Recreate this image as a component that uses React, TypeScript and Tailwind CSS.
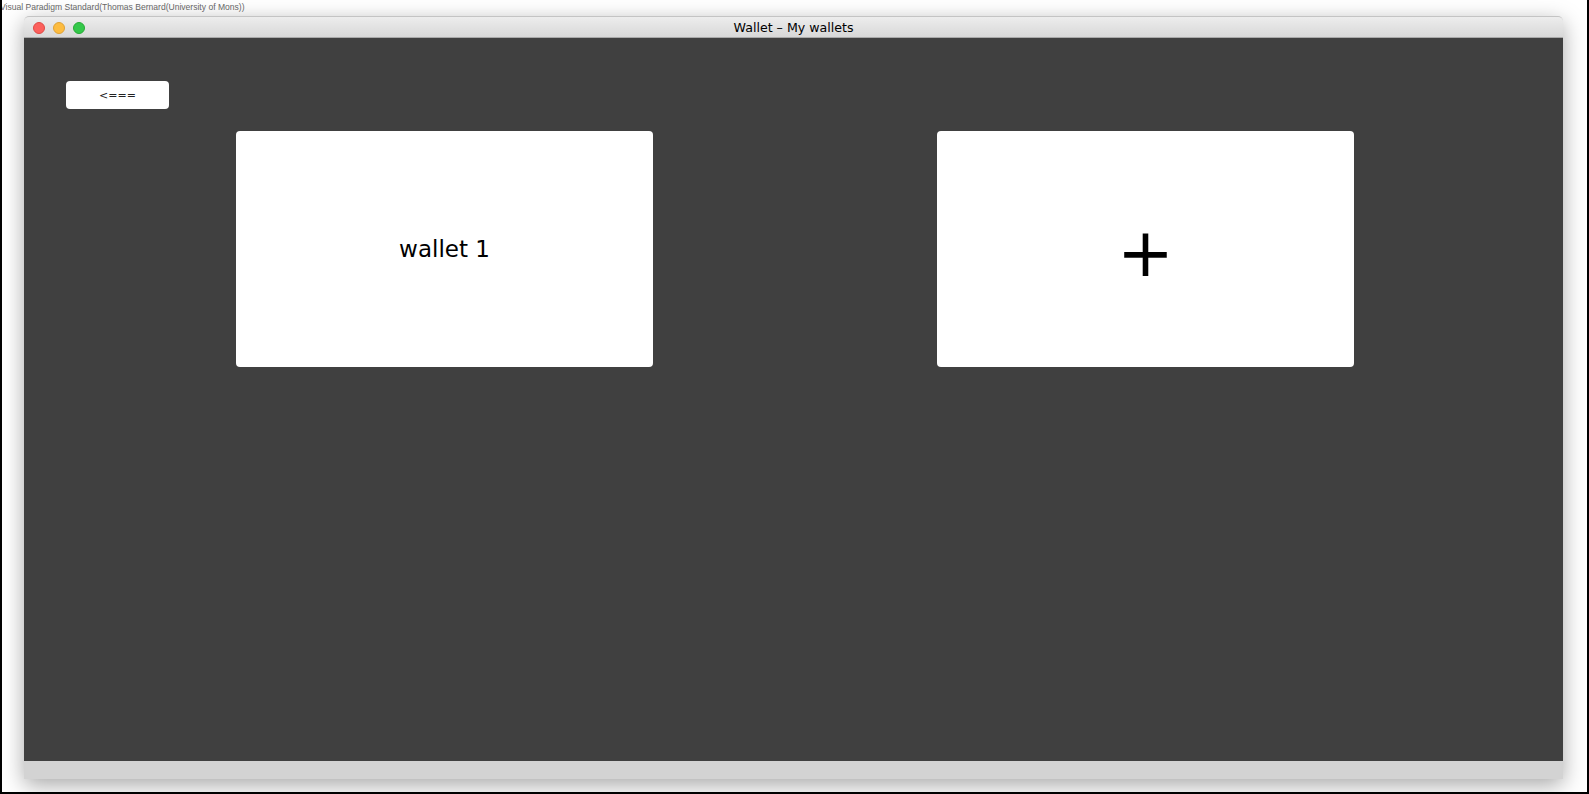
export default function App() {
  return (
    <div className="w-[1589px] h-[794px] bg-white border-l-2 border-r-2 border-b-2 border-black overflow-hidden box-border font-['DejaVu_Sans',sans-serif]">
      {/* tool caption */}
      <div className="h-[16px] -ml-[2px] pt-[1px] font-['Liberation_Sans',sans-serif] text-[8.55px] leading-[12px] text-[#666] whitespace-nowrap">
        Visual Paradigm Standard(Thomas Bernard(University of Mons))
      </div>

      {/* window */}
      <div className="ml-[22px] w-[1539px] rounded-t-[5px] shadow-[0_6px_22px_rgba(0,0,0,0.35)]">
        {/* title bar */}
        <div className="h-[22px] grid grid-cols-[1fr_auto_1fr] items-center pt-[3px] rounded-t-[5px] border-t border-[#c4c4c4] border-b border-b-[#a9a9a9] bg-gradient-to-b from-[#ededed] to-[#d8d8d8]">
          <div className="flex items-center gap-[8px] pl-[9px] -mt-[1px]">
            <span className="w-[12px] h-[12px] rounded-full bg-[#fc605c] border border-[#de4a45]" />
            <span className="w-[12px] h-[12px] rounded-full bg-[#fdbc40] border border-[#dea236]" />
            <span className="w-[12px] h-[12px] rounded-full bg-[#34c84a] border border-[#27aa35]" />
          </div>
          <div className="text-[12.6px] text-black leading-none">Wallet – My wallets</div>
          <div />
        </div>

        {/* content */}
        <div className="h-[723px] bg-[#404040] pt-[43px]">
          <div className="pl-[42px]">
            <button className="w-[103px] h-[28px] rounded-[4px] bg-white text-[11px] text-[#222] flex items-center justify-center leading-none">
              &lt;===
            </button>
          </div>

          <div className="flex gap-[284px] pl-[212px] mt-[22px]">
            <div className="w-[417px] h-[236px] rounded-[4px] bg-white flex items-center justify-center">
              <span className="text-[23px] text-black leading-none">wallet 1</span>
            </div>
            <div className="w-[417px] h-[236px] rounded-[4px] bg-white flex items-center justify-center">
              <span className="text-[68px] text-black leading-none pt-[8px]">+</span>
            </div>
          </div>
        </div>

        {/* bottom bar */}
        <div className="h-[18px] bg-[#d3d3d3]" />
      </div>
    </div>
  );
}
